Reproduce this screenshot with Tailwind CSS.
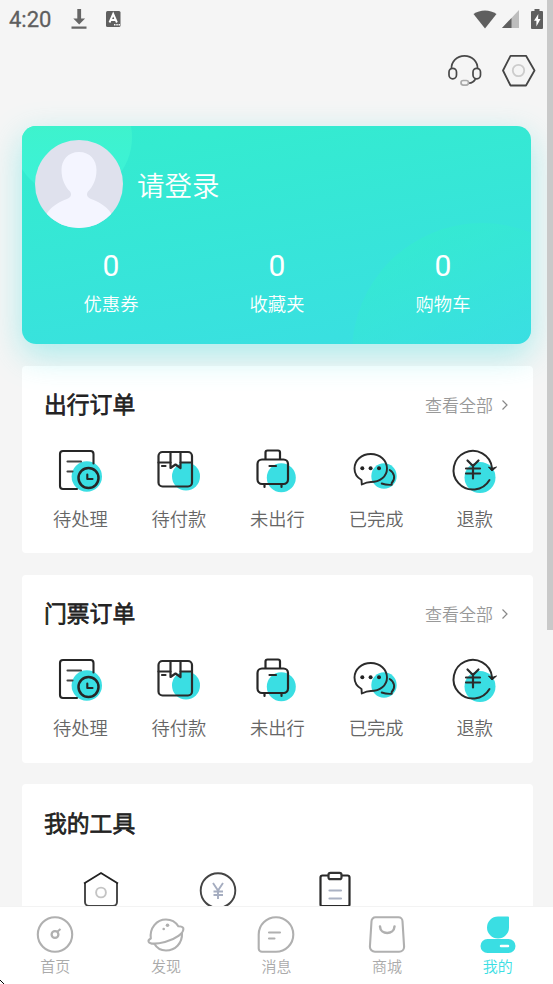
<!DOCTYPE html>
<html lang="zh-CN">
<head>
<meta charset="utf-8">
<title>我的</title>
<script src="https://cdn.jsdelivr.net/npm/@tailwindcss/browser@4"></script>
</head>
<body class="bg-[#f5f5f5] font-['Noto_Sans_CJK_SC_DemiLight','Noto_Sans_CJK_SC',sans-serif]">
<svg class="hidden">
  <symbol id="pending" viewBox="0 0 60 60">
    <circle cx="36.800" cy="37.500" r="15.200" fill="#3adee3"/>
    <g fill="none" stroke="#262626" stroke-width="2.100" stroke-linecap="round" stroke-linejoin="round">
      <path d="M43.500 24.500V15a3 3 0 0 0-3-3H13a3 3 0 0 0-3 3v32a3 3 0 0 0 3 3h14"/>
      <path d="M17.500 22.500h13.500M17.500 32.500h5" stroke="#444"/>
      <circle cx="38.500" cy="39" r="10" stroke-width="2.500"/>
      <path d="M37.300 35.500v4.500h5.200"/>
    </g>
  </symbol>
  <symbol id="pay" viewBox="0 0 60 60">
    <circle cx="37" cy="37.500" r="14" fill="#3adee3"/>
    <g fill="none" stroke="#2b2b2b" stroke-width="2.200" stroke-linecap="round" stroke-linejoin="round">
      <rect x="9.500" y="13" width="33.500" height="34.500" rx="4"/>
      <path d="M9.500 23.500h12M31.500 23.500h11.500M13 27h3.500"/>
      <path d="M21.500 13v16l5-3.500 5 3.500V13"/>
    </g>
  </symbol>
  <symbol id="travel" viewBox="0 0 60 60">
    <circle cx="34.300" cy="38.800" r="14.500" fill="#3adee3"/>
    <g fill="none" stroke="#262626" stroke-width="2.200" stroke-linecap="round" stroke-linejoin="round">
      <rect x="10.500" y="20.500" width="30.500" height="24.500" rx="4.500"/>
      <path d="M18.500 20v-6.500a2 2 0 0 1 2-2h10.500a2 2 0 0 1 2 2V20M22.500 27h6.500M17.500 45.500v2.500M34.500 45.500v2.500"/>
    </g>
  </symbol>
  <symbol id="done" viewBox="0 0 60 60">
    <circle cx="38" cy="37" r="12.700" fill="#3adee3"/>
    <g fill="none" stroke="#2b2b2b" stroke-width="1.900" stroke-linecap="round" stroke-linejoin="round">
      <path d="M15.500 41c-4.500-2.500-7-7-7-11.500 0-8 7-14.500 16.300-14.500s16.200 6.500 16.200 14.500-7 13.500-16.200 13.500c-2.500 0-4.500.3-9 2.500z"/>
      <path d="M43.700 31c5 3 6 9 2 13v1.800c-3.500.2-6 .2-10-1.300"/>
    </g>
    <g fill="#222"><circle cx="16.300" cy="29.300" r="2"/><circle cx="24.600" cy="29.300" r="2"/><circle cx="33" cy="29.300" r="2"/></g>
  </symbol>
  <symbol id="refund" viewBox="0 0 60 60">
    <circle cx="35" cy="38.500" r="15.500" fill="#3adee3"/>
    <g fill="none" stroke="#2b2b2b" stroke-width="2" stroke-linecap="round" stroke-linejoin="round">
      <path d="M47 29A19.300 19.300 0 1 0 44.500 41"/>
      <path d="M22.500 21.500l5.500 5.500 5.500-5.500M28 27v12.500M21 29.500h14M21 34.500h14" stroke-width="2.200"/>
    </g>
    <path d="M43.500 28l3.500 1.500 4.500-1.500-4.500 4z" fill="#222" stroke="#222" stroke-linejoin="round"/>
  </symbol>
  <symbol id="more" viewBox="0 0 8 12">
    <path d="M1.500 1.500l4.500 4.500-4.500 4.500" fill="none" stroke="#888" stroke-width="1.200"/>
  </symbol>
</svg>

<div class="relative w-[553px] h-[984px] overflow-hidden flex flex-col">
  <!-- status bar -->
  <header class="h-10 shrink-0 flex items-center pl-[9px] pr-2.5 pb-[2px] text-[#5f5f5f]">
    <span class="font-[Roboto] font-normal text-[22px] leading-10 w-[62px] pt-px [-webkit-text-stroke:0.3px_#5f5f5f]">4:20</span>
    <svg class="w-4 h-5" viewBox="0 0 16 20"><path d="M6.300 0h3.800v9.500h4L8.200 15.500 2.300 9.500h4zM.5 17.500h15v2.200H.5z" fill="#666"/></svg>
    <svg class="w-[15px] h-4 ml-[19px]" viewBox="0 0 15 16"><rect width="14.500" height="16" rx="1.500" fill="#5f5f5f"/><path d="M3.500 11.500L7.200 3l3.700 8.500M5 9h4.500" fill="none" stroke="#fff" stroke-width="1.900"/><path d="M8 13h1.500v1.500H8zM10.300 13h1.500v1.500h-1.500zM12.500 13H14v1.500h-1.500z" fill="#f5f5f5"/></svg>
    <svg class="w-6 h-[19px] ml-auto" viewBox="0 0 24 19"><path d="M.5 4C7-.700 17-.700 23.500 4L12 18.500z" fill="#5f5f5f"/></svg>
    <svg class="w-[17px] h-[18px] ml-[5px]" viewBox="0 0 17 18"><path d="M17 0v18H0z" fill="#bdbdbd"/><path d="M9.500 8v10H0z" fill="#5f5f5f"/></svg>
    <svg class="w-3 h-5 ml-3" viewBox="0 0 12 20"><path d="M3.500 0h5v2H11a1 1 0 0 1 1 1v16a1 1 0 0 1-1 1H1a1 1 0 0 1-1-1V3a1 1 0 0 1 1-1h2.500z" fill="#5f5f5f"/><path d="M7.300 5L3 11.700h2.400v5.800L9.500 10H7.100z" fill="#fff"/></svg>
  </header>

  <main class="flex-1 min-h-0 overflow-hidden flex flex-col">
    <div class="h-[86px] shrink-0 flex justify-end pt-3 pr-4 gap-[18px]">
      <svg class="w-[36px] h-[36px]" viewBox="0 0 36 36" fill="none" stroke="#484848" stroke-width="1.700">
        <path d="M4.500 17C4 9.500 10 3.800 17.500 3.800S31 9.500 30.500 17"/>
        <rect x="2" y="16.300" width="7.500" height="10.500" rx="3.700"/><rect x="26" y="16.300" width="7.500" height="10.500" rx="3.700"/>
        <path d="M28.500 27c-1.500 2.500-4 4-6.500 4.200"/><rect x="14" y="28.500" width="7.500" height="4.600" rx="2.300" stroke="#aaa"/>
      </svg>
      <svg class="w-[36px] h-[36px]" viewBox="0 0 36 36" fill="none" stroke="#454545" stroke-width="1.800" stroke-linejoin="round">
        <path d="M9.500 3.800h15.500L33.500 18.500 25 33.500H9.500L2 18.500z"/><circle cx="17.500" cy="18.500" r="5.700" stroke="#ccc"/>
      </svg>
    </div>

    <!-- member card -->
    <section class="relative z-10 mx-[22px] w-[509px] h-[218px] shrink-0 rounded-[14px] bg-linear-[170deg,#33edcd,#3adee3] shadow-[0_11px_33px_rgba(58,222,222,0.4)]">
      <div class="absolute inset-0 rounded-[14px] overflow-hidden">
        <div class="absolute -left-[9px] -top-[48px] size-[119px] rounded-full bg-linear-to-b from-[#3ff3c4] to-[#3cf2da]"></div>
        <div class="absolute left-[330px] top-[97px] size-[260px] rounded-full bg-linear-[155deg,#34edcd_10%,#3adee3_55%] opacity-60"></div>
      </div>
      <div class="relative flex items-center pl-[13px] pt-[14px]">
        <svg class="size-[88px]" viewBox="0 0 88 88">
          <clipPath id="face"><circle cx="44" cy="44" r="44"/></clipPath>
          <g clip-path="url(#face)"><path d="M0 0h88v88H0z" fill="#dfe1ed"/><path d="M44 12c-11 0-17.500 8-17.500 18 0 10 4 17 8.500 21.500 2 3 1 6-3 7.500C21 63 14 69 11 75v13h66V75c-3-6-10-12-21-16-4-1.500-5-4.500-3-7.500C57.500 47 61.500 40 61.500 30c0-10-6.500-18-17.500-18z" fill="#f4f5ff"/></g>
        </svg>
        <span class="ml-3.5 text-[27.500px] leading-10 text-white">请登录</span>
      </div>
      <div class="relative grid grid-cols-3 ml-[6px] mr-[5px] pt-[17px] text-center text-white">
        <div><p class="text-[30px] leading-[42px] font-[Roboto] font-normal">0</p><p class="text-[18.300px] leading-[33px]">优惠券</p></div>
        <div><p class="text-[30px] leading-[42px] font-[Roboto] font-normal">0</p><p class="text-[18.300px] leading-[33px]">收藏夹</p></div>
        <div><p class="text-[30px] leading-[42px] font-[Roboto] font-normal">0</p><p class="text-[18.300px] leading-[33px]">购物车</p></div>
      </div>
    </section>

    <section class="mt-[22px] mx-[22px] w-[511px] h-[187px] shrink-0 rounded bg-white">
      <div class="flex items-center justify-between h-[76px] pl-[22px] pr-[24px]">
        <h2 class="text-[22.800px] [-webkit-text-stroke:0.8px_#222] text-[#222]">出行订单</h2>
        <a class="flex items-center gap-2 pt-px text-[17px] text-[#999]">查看全部<svg class="w-2 h-3"><use href="#more"/></svg></a>
      </div>
      <div class="-mt-[3px] grid grid-cols-5 mx-[9px] text-center text-[18.300px] leading-[26px] text-[#666]">
        <div class="flex flex-col items-center gap-[6px]"><svg class="size-[60px]"><use href="#pending"/></svg>待处理</div>
        <div class="flex flex-col items-center gap-[6px]"><svg class="size-[60px]"><use href="#pay"/></svg>待付款</div>
        <div class="flex flex-col items-center gap-[6px]"><svg class="size-[60px]"><use href="#travel"/></svg>未出行</div>
        <div class="flex flex-col items-center gap-[6px]"><svg class="size-[60px]"><use href="#done"/></svg>已完成</div>
        <div class="flex flex-col items-center gap-[6px]"><svg class="size-[60px]"><use href="#refund"/></svg>退款</div>
      </div>
    </section>

    <section class="mt-[22px] mx-[22px] w-[511px] h-[188px] shrink-0 rounded bg-white">
      <div class="flex items-center justify-between h-[76px] pl-[22px] pr-[24px]">
        <h2 class="text-[22.800px] [-webkit-text-stroke:0.8px_#222] text-[#222]">门票订单</h2>
        <a class="flex items-center gap-2 pt-px text-[17px] text-[#999]">查看全部<svg class="w-2 h-3"><use href="#more"/></svg></a>
      </div>
      <div class="-mt-[3px] grid grid-cols-5 mx-[9px] text-center text-[18.300px] leading-[26px] text-[#666]">
        <div class="flex flex-col items-center gap-[6px]"><svg class="size-[60px]"><use href="#pending"/></svg>待处理</div>
        <div class="flex flex-col items-center gap-[6px]"><svg class="size-[60px]"><use href="#pay"/></svg>待付款</div>
        <div class="flex flex-col items-center gap-[6px]"><svg class="size-[60px]"><use href="#travel"/></svg>未出行</div>
        <div class="flex flex-col items-center gap-[6px]"><svg class="size-[60px]"><use href="#done"/></svg>已完成</div>
        <div class="flex flex-col items-center gap-[6px]"><svg class="size-[60px]"><use href="#refund"/></svg>退款</div>
      </div>
    </section>

    <section class="mt-[21px] mx-[22px] w-[511px] h-[240px] shrink-0 rounded bg-white">
      <h2 class="h-[76px] pl-[22px] leading-[77px] text-[22.800px] [-webkit-text-stroke:0.8px_#222] text-[#222]">我的工具</h2>
      <div class="grid grid-cols-4 ml-5 mr-[23px] pt-[9.500px] justify-items-center">
        <svg class="size-[40px]" viewBox="0 0 40 40" fill="none" stroke-width="1.900"><path d="M4 13v19a4 4 0 0 0 4 4h24a4 4 0 0 0 4-4V13" stroke="#444"/><path d="M3 13.500L20 3l17 10.500" stroke="#222"/><circle cx="20" cy="22.500" r="4.900" stroke="#c4c4c4"/></svg>
        <svg class="size-[40px]" viewBox="0 0 40 40" fill="none" stroke-width="1.900"><circle cx="20" cy="20.500" r="17.300" stroke="#444"/><path d="M15 13l5 7.500 5-7.500M20 20.500v8.500M15.500 21.500h9.500M15.500 25h9.500" stroke="#a5adc0"/></svg>
        <svg class="size-[40px]" viewBox="0 0 40 40" fill="none" stroke-width="2.200"><path d="M13.500 5.500H7.500a2 2 0 0 0-2 2V34.500a1.500 1.500 0 0 0 1.500 1.500H33a1.500 1.500 0 0 0 1.500-1.500V7.500a2 2 0 0 0-2-2H26.500" stroke="#292929"/><rect x="13.500" y="2.900" width="13" height="6.300" rx="2" stroke="#333"/><path d="M14.500 20.500h11.500M14.500 28.500h11.500" stroke="#aab2c3" stroke-linecap="round"/></svg>
      </div>
    </section>
  </main>

  <nav class="relative z-20 h-[78px] shrink-0 grid grid-cols-5 bg-white border-t border-[#f3f3f3] text-[#aaa] text-[15px] leading-[22px]">
    <a class="flex flex-col items-center pt-2"><svg class="size-[40px]" viewBox="0 0 40 40" fill="none" stroke="#b0b0b0" stroke-width="2.100"><circle cx="20" cy="19.500" r="17.200"/><circle cx="20" cy="19.500" r="3.400" stroke-width="2.300"/><path d="M22 17l3.500-3"/></svg>首页</a>
    <a class="flex flex-col items-center pt-2"><svg class="size-[40px]" viewBox="0 0 40 40" fill="none" stroke="#b0b0b0" stroke-width="2.100" stroke-linejoin="round"><path d="M4.800 23.500C3.500 13 10.500 4.500 20 4.500c5.500 0 9.800 2.700 12.300 6.800 2.500 0 4.500.7 5 1.900 1 4.800-7.800 11.300-18.300 13.800C10 29.300 3.500 29 2.600 26.600c-.4-1.200.5-2.300 2.200-3.100z"/><path d="M8.200 28.500c2.500 4.500 7 7 11.800 7 9 0 16.500-7 16-17.500"/><circle cx="21.500" cy="10.200" r="1.800" fill="#b0b0b0" stroke="none"/><circle cx="17.700" cy="14" r="1.300" fill="#b0b0b0" stroke="none"/></svg>发现</a>
    <a class="flex flex-col items-center pt-2"><svg class="size-[40px]" viewBox="0 0 40 40" fill="none" stroke="#b0b0b0" stroke-width="2.100" stroke-linecap="round"><path d="M2.700 33.500V19.500A17.300 17.300 0 1 1 20 36.800H6a3.300 3.300 0 0 1-3.300-3.300z"/><path d="M13 17.500h11M13 23.500h5.500"/></svg>消息</a>
    <a class="flex flex-col items-center pt-2"><svg class="size-[40px]" viewBox="0 0 40 40" fill="none" stroke="#b0b0b0" stroke-width="2.100"><path d="M8.500 2.300h23a4 4 0 0 1 4 4l1.600 25.500a5 5 0 0 1-5 5H7.900a5 5 0 0 1-5-5L4.500 6.300a4 4 0 0 1 4-4z"/><path d="M13 11.500c.3 8.500 14 8.500 14.500 0" stroke-width="2.500" stroke-linecap="round"/></svg>商城</a>
    <a class="flex flex-col items-center pt-2 text-[#3adee3]"><svg class="size-[40px]" viewBox="0 0 40 40"><path d="M20 1.500h10a1 1 0 0 1 1 1V12.500a11 11 0 1 1-11-11z" fill="#3adee3"/><rect x="2.500" y="24" width="35" height="14" rx="7" fill="#3adee3"/><path d="M23 31h7" stroke="#fff" stroke-width="2.500" stroke-linecap="round"/></svg>我的</a>
  </nav>

  <div class="absolute z-30 right-0 top-0 w-[6px] h-[630px] bg-[#c9c9c9]"></div>
  <svg class="absolute z-30 left-0 bottom-0 w-1 h-1" viewBox="0 0 4 4"><path d="M0 0l4 4" stroke="#000"/></svg>
</div>
</body>
</html>
